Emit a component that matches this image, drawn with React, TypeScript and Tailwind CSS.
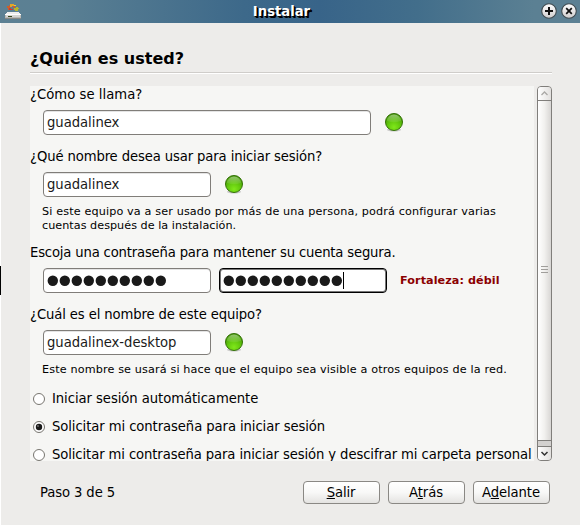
import type { ReactNode } from 'react';

const UI = "font-['DejaVu_Sans_Condensed','DejaVu_Sans',sans-serif] [font-stretch:semi-condensed]";
const SANS = "font-['DejaVu_Sans',sans-serif] [font-stretch:normal]";

function InstallerIcon() {
  return (
    <svg width="16" height="16" viewBox="0 0 16 16" shapeRendering="crispEdges">
      <g transform="translate(0 1)">
        <path d="M2 2h2v-1h3v1h-2v2h-1v2h-1v-2h-1z" fill="#c9602b" />
        <path d="M5 0h4v1h2v1h-4v1h-2z" fill="#e2a529" />
        <path d="M4 4h2v1h2v1h-4z" fill="#c93b38" />
        <path d="M8 2h2v2h-2z" fill="#cf5a30" />
        <path d="M9 4h2v-1h2v1h1v1h-1v2h-3v-1h-1z" fill="#b6b52d" />
        <path d="M9 1h2v1h-2z" fill="#e8c936" />
      </g>
      <path d="M2 9h12l2 3v4h-16v-4z" fill="#b9b9b6" />
      <path d="M2 9h12l1 2h-14z" fill="#eeeeec" />
      <path d="M0 11h16v1h-16z" fill="#ffffff" />
      <path d="M1 12h14v2h-14z" fill="#d6d6d3" />
      <path d="M3 13h4v1h-4z" fill="#34451c" />
      <path d="M0 15h16v1h-16z" fill="#888a85" />
    </svg>
  );
}

function WindowButton({ kind }: { kind: 'max' | 'close' }) {
  return (
    <svg width="16" height="16" viewBox="0 0 16 16">
      <defs>
        <linearGradient id={kind} x1="0" y1="0" x2="0" y2="1">
          <stop offset="0" stopColor="#ffffff" />
          <stop offset="1" stopColor="#cfcdcd" />
        </linearGradient>
      </defs>
      <circle cx="8" cy="8" r="7.3" fill={`url(#${kind})`} stroke="#3f4a50" strokeWidth="1.1" />
      {kind === 'max' ? (
        <path d="M8 4v8M4 8h8" stroke="#111" strokeWidth="2" />
      ) : (
        <path d="M5.2 5.2l5.6 5.6M10.8 5.2l-5.6 5.6" stroke="#111" strokeWidth="1.7" />
      )}
    </svg>
  );
}

function Led() {
  return (
    <svg width="20" height="20" viewBox="0 0 20 20" className="mb-px">
      <defs>
        <radialGradient id="led" cx=".5" cy=".8" r=".75">
          <stop offset="0" stopColor="#80e81a" />
          <stop offset=".5" stopColor="#62c80d" />
          <stop offset="1" stopColor="#419405" />
        </radialGradient>
        <linearGradient id="gloss" x1="0" y1="0" x2="0" y2="1">
          <stop offset="0" stopColor="#fff" stopOpacity=".42" />
          <stop offset="1" stopColor="#fff" stopOpacity=".06" />
        </linearGradient>
      </defs>
      <ellipse cx="10" cy="17.8" rx="7" ry="1.8" fill="#000" opacity=".18" />
      <circle cx="10" cy="10" r="8.5" fill="url(#led)" stroke="#357208" />
      <path d="M3 9a7 6.5 0 0 1 14 0q-7 2.500-14 0z" fill="url(#gloss)" />
    </svg>
  );
}

function Label({ children, className = '' }: { children: ReactNode; className?: string }) {
  return <div className={`h-4 whitespace-nowrap text-[14.67px] leading-4 ${className}`}>{children}</div>;
}

function Field({ children, wide, focus }: { children: ReactNode; wide?: boolean; focus?: boolean }) {
  return (
    <div
      className={`flex h-[25px] shrink-0 items-center rounded-[4px] border bg-white pb-[2px] pl-[3px] text-[14.67px] leading-4 tracking-[-0.03px] whitespace-nowrap text-[#1a1a1a] ${
        wide ? 'w-[328px]' : 'w-[168px]'
      } ${focus ? 'border-black shadow-[inset_0_0_0_1px_#777]' : 'border-[#807d79] shadow-[inset_0_1px_0_#e4e4e4]'}`}
    >
      {children}
    </div>
  );
}

function Dots() {
  return (
    <svg width="120" height="12" viewBox="0 0 120 12">
      {Array.from({ length: 10 }, (_, i) => (
        <circle key={i} cx={5.8 + i * 12} cy="6.800" r="5.200" fill="#1a1a1a" />
      ))}
    </svg>
  );
}

function Radio({ children, checked, className }: { children: ReactNode; checked?: boolean; className: string }) {
  return (
    <div className="flex h-7 shrink-0 items-center gap-[7px] pl-[3px] text-[14.67px] leading-4 whitespace-nowrap">
      <svg width="12" height="12" viewBox="0 0 12 12" className="mt-px shrink-0">
        <circle cx="6" cy="6" r="5.500" fill="#fff" stroke="#77756f" />
        {checked && <circle cx="6" cy="6" r="3.200" fill="#1a1a1a" />}
        {checked && <circle cx="5" cy="5" r=".9" fill="#777" />}
      </svg>
      <span className={className}>{children}</span>
    </div>
  );
}

function Button({ children }: { children: ReactNode }) {
  return (
    <div className="flex h-[23px] w-[77px] items-center justify-center rounded-[4px] border border-[#8a8884] bg-linear-to-b from-white via-[#f8f8f7] to-[#e4e3e1] text-[14.67px] leading-4 tracking-[-0.1px]">
      <span className="-mt-px -ml-px">{children}</span>
    </div>
  );
}

function U({ children }: { children: ReactNode }) {
  return <span className="underline decoration-1 underline-offset-1">{children}</span>;
}

function Scrollbar() {
  return (
    <div className="ml-[3px] flex h-[375px] w-[15px] flex-col overflow-hidden rounded-[4px] border border-[#807e7b] bg-[#d3d1cf]">
      <div className="flex h-[14px] shrink-0 items-center justify-center border-b border-[#807e7b] bg-linear-to-r from-white to-[#e2e0de]">
        <svg width="7" height="5" viewBox="0 0 7 5"><path d="M.5 4l3-3 3 3" fill="none" stroke="#aaa8a5" strokeWidth="1.300" /></svg>
      </div>
      <div className="flex h-[340px] shrink-0 flex-col items-center justify-center gap-[2px] border-b border-[#807e7b] bg-linear-to-r from-white via-[#f1f0ee] to-[#d8d6d4] pb-[2px]">
        <div className="h-px w-[7px] bg-[#a09e9b]" />
        <div className="h-px w-[7px] bg-[#a09e9b]" />
        <div className="h-px w-[7px] bg-[#a09e9b]" />
      </div>
      <div className="mt-[5px] flex h-[14px] shrink-0 items-center justify-center border-t border-[#807e7b] bg-linear-to-r from-white to-[#e2e0de]">
        <svg width="9" height="6" viewBox="0 0 9 6"><path d="M1.500 1l3 3 3-3" fill="none" stroke="#333" strokeWidth="1.500" /></svg>
      </div>
    </div>
  );
}

export default function App() {
  return (
    <div className={`relative flex h-[525px] w-[580px] flex-col overflow-hidden bg-[#edecea] text-black ${UI}`}>
      <div className="flex h-[23px] shrink-0 items-start bg-[linear-gradient(90deg,#5c8093_0%,#5b8093_10%,#3d698a_42%,#386489_55%,#426e8b_72%,#5b8093_92%,#5c8093_100%)] pt-[3px]">
        <div className="w-[25px] pl-[5px]"><InstallerIcon /></div>
        <div className="grow pr-[3px] text-center text-[14.67px] leading-4 font-bold text-white [text-shadow:1px_1px_0_#000,2px_2px_0_#000]">Instalar</div>
        <div className="flex gap-1 pr-[3px]">
          <WindowButton kind="max" />
          <WindowButton kind="close" />
        </div>
      </div>

      <div className="flex grow flex-col border-l border-white pl-[29px]">
        <div className={`mt-[25px] h-6 w-[522px] text-[16px] leading-[22px] font-bold tracking-[0.03px] ${SANS}`}>¿Quién es usted?</div>
        <div className="h-[2px] w-[522px] border-t border-[#cfcdca] bg-white" />

        <div className="mt-3 flex">
          <div className="flex h-[375px] w-[504px] flex-col overflow-hidden bg-[#f6f6f4] [&>*]:shrink-0">
            <Label className="tracking-[0.03px]">¿Cómo se llama?</Label>
            <div className="mt-[7px] flex h-[27px] items-center gap-[13px] pl-[13px]">
              <Field wide>guadalinex</Field>
              <Led />
            </div>
            <Label className="mt-3 tracking-[-0.115px]">¿Qué nombre desea usar para iniciar sesión?</Label>
            <div className="mt-[7px] flex h-[27px] items-center gap-[13px] pl-[13px]">
              <Field>guadalinex</Field>
              <Led />
            </div>
            <div className={`mt-[7px] h-[27px] pl-3 text-[11.2px] leading-[14px] whitespace-nowrap ${SANS}`}>
              <div className="tracking-[0.14px]">Si este equipo va a ser usado por más de una persona, podrá configurar varias</div>
              <div className="tracking-[0.03px]">cuentas después de la instalación.</div>
            </div>
            <Label className="mt-3 tracking-[-0.17px]">Escoja una contraseña para mantener su cuenta segura.</Label>
            <div className="mt-[7px] flex h-[27px] items-center gap-2 pl-[13px]">
              <Field><Dots /></Field>
              <Field focus><Dots /><span className="mt-px h-[17px] w-px bg-black" /></Field>
              <span className={`pt-px pl-[5px] text-[11.2px] font-bold tracking-[0.08px] whitespace-nowrap text-[#8b0000] ${SANS}`}>Fortaleza: débil</span>
            </div>
            <Label className="mt-3 tracking-[-0.115px]">¿Cuál es el nombre de este equipo?</Label>
            <div className="mt-[7px] flex h-[27px] items-center gap-[13px] pl-[13px]">
              <Field>guadalinex-desktop</Field>
              <Led />
            </div>
            <div className={`mt-[7px] h-[14px] pl-3 text-[11.2px] leading-[14px] tracking-[0.14px] whitespace-nowrap ${SANS}`}>
              Este nombre se usará si hace que el equipo sea visible a otros equipos de la red.
            </div>
            <div className="mt-[7px] flex flex-col">
              <Radio className="tracking-[-0.06px]">Iniciar sesión automáticamente</Radio>
              <Radio checked className="tracking-[-0.08px]">Solicitar mi contraseña para iniciar sesión</Radio>
              <Radio className="tracking-[-0.1px]">Solicitar mi contraseña para iniciar sesión y descifrar mi carpeta personal</Radio>
            </div>
          </div>
          <Scrollbar />
        </div>

        <div className="mt-5 flex h-[23px] w-[520px] items-center pl-[10px] text-[14.67px] leading-4">
          <span className="-mt-px grow tracking-[-0.1px]">Paso 3 de 5</span>
          <div className="flex gap-2">
            <Button><U>S</U>alir</Button>
            <Button>A<U>t</U>rás</Button>
            <Button>A<U>d</U>elante</Button>
          </div>
        </div>
      </div>
      <div className="absolute top-[266px] left-0 h-[29px] w-px bg-black" />
    </div>
  );
}
